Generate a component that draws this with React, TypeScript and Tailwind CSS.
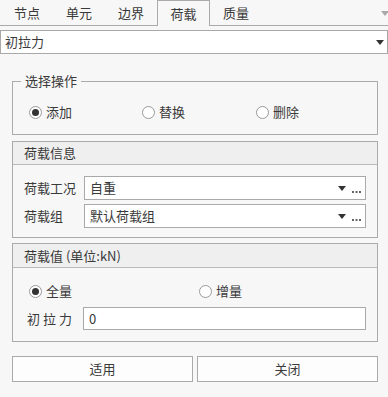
import React from "react"

const tabs = ["节点", "单元", "边界", "荷载", "质量"]

function Arrow() {
  return (
    <svg width="8" height="5" viewBox="0 0 8 5" className="shrink-0">
      <path d="M0 0h8L4 5z" fill="#333" />
    </svg>
  )
}

function Dots() {
  return (
    <svg width="9" height="2" viewBox="0 0 9 2" className="shrink-0 ml-[6px] mt-[7px]">
      <rect x="0" y="0" width="2" height="2" fill="#666" />
      <rect x="3.5" y="0" width="2" height="2" fill="#666" />
      <rect x="7" y="0" width="2" height="2" fill="#666" />
    </svg>
  )
}

function Radio({ checked, label }: { checked?: boolean; label: string }) {
  return (
    <div className="flex items-center gap-[4px]">
      <span className="w-[13px] h-[13px] rounded-full border border-[#9a9a9a] bg-white flex items-center justify-center">
        {checked && <span className="w-[7px] h-[7px] rounded-full bg-[#333]" />}
      </span>
      <span>{label}</span>
    </div>
  )
}

function Combo({ value }: { value: string }) {
  return (
    <div className="flex-1 h-[24px] border border-[#a9a9a9] bg-white flex items-center pl-[5px] pr-[4px]">
      <span className="flex-1">{value}</span>
      <Arrow />
      <Dots />
    </div>
  )
}

export default function App() {
  return (
    <div
      className="w-[388px] h-[397px] bg-[#f7f7f7] text-[13px] text-[#3a3a3a] overflow-hidden"
      style={{ fontFamily: '"Noto Sans CJK SC", "Noto Sans", sans-serif' }}
    >
      {/* tabs */}
      <div className="relative h-[26px] flex border-b border-[#aaa] pl-[1px]">
        {tabs.map((t) => (
          <div
            key={t}
            className={
              t === "荷载"
                ? "w-[53px] h-[26px] -mb-px border border-b-0 border-[#aaa] bg-[#f7f7f7] flex items-center justify-center"
                : "w-[52px] h-[25px] flex items-center justify-center"
            }
          >
            {t}
          </div>
        ))}
        <svg width="8" height="5" viewBox="0 0 8 5" className="absolute right-[-1px] top-[11px]">
          <path d="M0 0h8L4 5z" fill="#aaa" />
        </svg>
      </div>

      {/* main dropdown */}
      <div className="mt-[4px] h-[24px] border border-[#a9a9a9] bg-white flex items-center pl-[4px] pr-[3px]">
        <span className="flex-1">初拉力</span>
        <Arrow />
      </div>

      <div className="pl-[12px] pr-[10px]">
        {/* 选择操作 */}
        <div className="relative mt-[27px] h-[54px] border border-[#aaa]">
          <span className="absolute left-[8px] -top-[11px] px-[4px] bg-[#f7f7f7]">选择操作</span>
          <div className="flex mt-[22px] pl-[16px] h-[16px] items-center">
            <div className="w-[113px]"><Radio checked label="添加" /></div>
            <div className="w-[114px]"><Radio label="替换" /></div>
            <Radio label="删除" />
          </div>
        </div>

        {/* 荷载信息 */}
        <div className="mt-[6px] h-[97px] border border-[#aaa]">
          <div className="h-[23px] bg-[#efefef] border-b border-[#bbb] flex items-center pl-[11px]">荷载信息</div>
          <div className="pl-[11px] pr-[11px] pt-[11px] flex flex-col gap-[4px]">
            <div className="flex items-center">
              <span className="w-[60px]">荷载工况</span>
              <Combo value="自重" />
            </div>
            <div className="flex items-center">
              <span className="w-[60px]">荷载组</span>
              <Combo value="默认荷载组" />
            </div>
          </div>
        </div>

        {/* 荷载值 */}
        <div className="mt-[5px] h-[99px] border border-[#aaa]">
          <div className="h-[24px] bg-[#efefef] border-b border-[#bbb] flex items-center pl-[11px]">荷载值 (单位:kN)</div>
          <div className="flex mt-[15px] pl-[16px] h-[16px] items-center">
            <div className="w-[170px]"><Radio checked label="全量" /></div>
            <Radio label="增量" />
          </div>
          <div className="flex items-center mt-[8px] pl-[14px] pr-[11px]">
            <span className="w-[56px] tracking-[3px]">初拉力</span>
            <div className="flex-1 h-[23px] border border-[#a9a9a9] bg-white flex items-center pl-[5px]">0</div>
          </div>
        </div>

        {/* buttons */}
        <div className="mt-[14px] flex gap-[4px]">
          <button className="flex-1 h-[26px] border border-[#aaa] bg-[#fdfdfd]">适用</button>
          <button className="flex-1 h-[26px] border border-[#aaa] bg-[#fdfdfd]">关闭</button>
        </div>
      </div>
    </div>
  )
}
